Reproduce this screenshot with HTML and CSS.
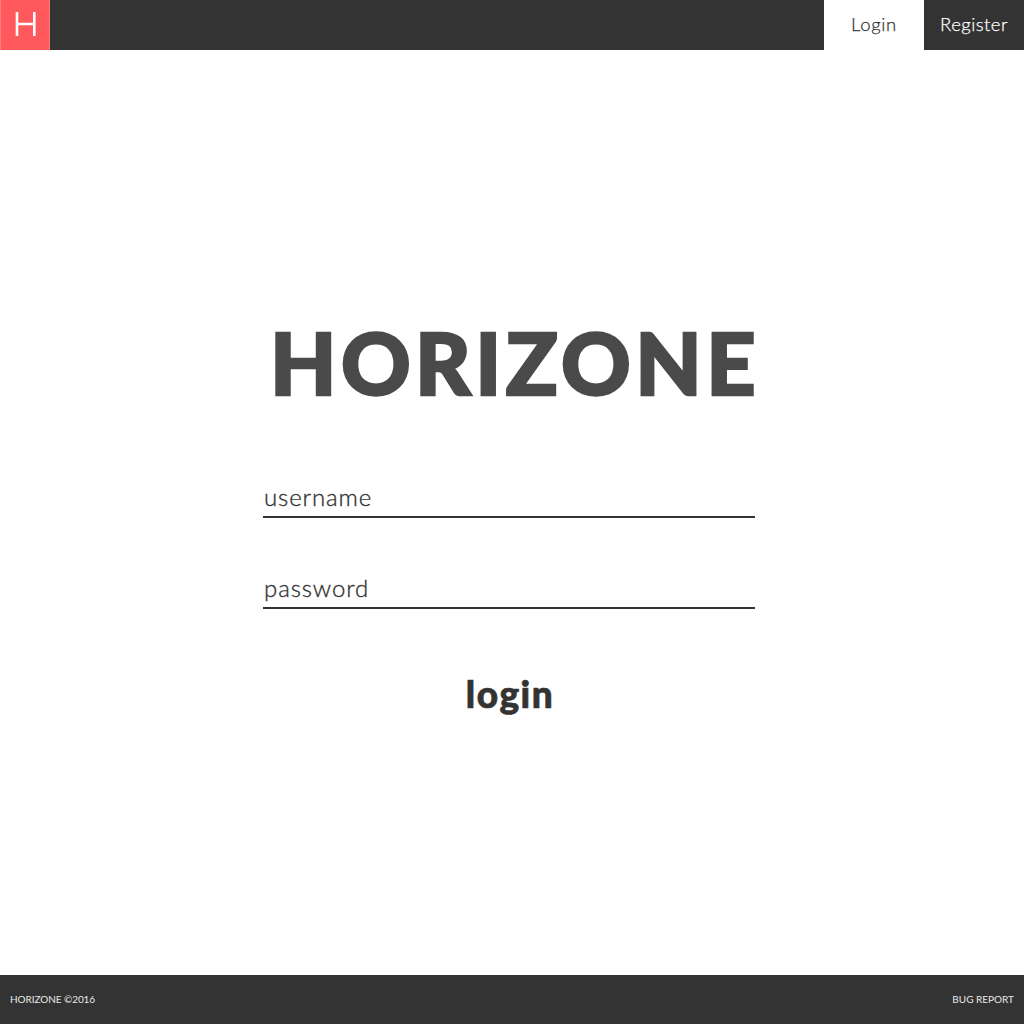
FILE: index.html
```html
<!DOCTYPE html>
<html lang="en">
<head>
<meta charset="utf-8">
<title>Horizone</title>
<link rel="stylesheet" href="styles.css">
</head>
<body>
<header class="topbar">
  <a class="logo" aria-label="Horizone home"><svg width="50" height="50" viewBox="0 0 50 50"><path d="M0.5 0V50M49.5 0V50" fill="none" stroke="#ff7c80"/><path d="M17 12V36M34.3 12V36M17 24H34" fill="none" stroke="#fff" stroke-width="2.6"/></svg></a>
  <nav class="nav">
    <a class="tab tab-active">Login</a>
    <a class="tab">Register</a>
  </nav>
</header>
<main class="content">
  <h1 class="title">HORIZONE</h1>
  <form class="form">
    <label class="field"><span class="username">username</span></label>
    <label class="field"><span class="password">password</span></label>
    <button class="submit" type="button">login</button>
  </form>
</main>
<footer class="footer"><span class="copyright">HORIZONE ©2016</span><a class="report">BUG REPORT</a></footer>
</body>
</html>
```
FILE: styles.css
```css
* { box-sizing: border-box; }
body { margin: 0; height: 1024px; display: flex; flex-direction: column; background: #fff; color: #333; font-family: Lato, sans-serif; }
.topbar { height: 50px; background: #333; display: flex; justify-content: space-between; }
.logo { width: 50px; height: 50px; background: #ff585d; }
.logo svg { display: block; }
.nav { display: flex; }
.tab { width: 100px; height: 50px; line-height: 49px; text-align: center; color: #fff; font-size: 18.5px; font-weight: 300; letter-spacing: .45px; -webkit-text-stroke: .25px currentColor; }
.tab-active { background: #fff; color: #333; letter-spacing: .7px; }
.content { flex: 1; padding: 262px 269px 0 263px; }
.title { margin: 0; padding-left: 7px; height: 100px; line-height: 100px; font-size: 86px; font-weight: 900; letter-spacing: 4.4px; color: #4a4a4a; -webkit-text-stroke: 2.4px #4a4a4a; white-space: nowrap; }
.form { padding-top: 68px; display: flex; flex-direction: column; }
.field { height: 38px; margin-bottom: 53px; border-bottom: 2px solid #333; font-size: 24px; font-weight: 300; letter-spacing: .9px; line-height: 33px; padding-left: 1px; -webkit-text-stroke: .35px #333; }
.submit { align-self: center; border: 0; padding: 0 0 0 2px; margin-top: 8px; background: none; font: 900 37px/48px Lato, sans-serif; letter-spacing: 1.5px; -webkit-text-stroke: .7px #333; color: #333; }
.footer { height: 49px; background: #333; color: #e8e8e8; display: flex; justify-content: space-between; padding: 0 10px; line-height: 49px; font-size: 10px; }
.copyright { letter-spacing: -.07px; }
```
